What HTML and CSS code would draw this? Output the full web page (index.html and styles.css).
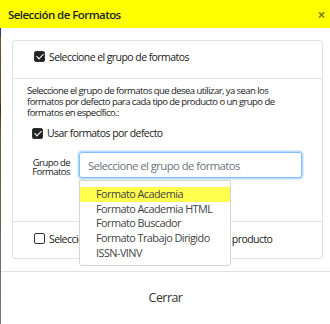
FILE: index.html
```html
<!DOCTYPE html>
<html lang="es">
<head>
<meta charset="utf-8">
<link rel="stylesheet" href="styles.css">
</head>
<body>
<div class="backdrop"></div>
<div class="modal">
  <div class="modal-header">
    <h5 class="modal-title">Selección de Formatos</h5>
    <span class="close">&times;</span>
  </div>
  <div class="modal-body">
    <div class="group">
      <div class="section section-top">
        <label class="check"><span class="box checked"></span>Seleccione el grupo de formatos</label>
      </div>
      <div class="section section-mid">
        <p class="desc">Seleccione el grupo de formatos que desea utilizar, ya sean los formatos por defecto para cada tipo de producto o un grupo de formatos en específico.:</p>
        <label class="check check-inner"><span class="box checked"></span>Usar formatos por defecto</label>
        <div class="field">
          <label class="field-label">Grupo de<br>Formatos</label>
          <div class="select-wrap">
            <div class="input">Seleccione el grupo de formatos</div>
            <ul class="dropdown">
              <li class="active">Formato Academia</li>
              <li>Formato Academia HTML</li>
              <li>Formato Buscador</li>
              <li>Formato Trabajo Dirigido</li>
              <li>ISSN-VINV</li>
            </ul>
          </div>
        </div>
      </div>
      <div class="section section-bot">
        <label class="check"><span class="box"></span>Seleccione los formatos para cada tipo de producto</label>
      </div>
    </div>
  </div>
  <div class="modal-footer">
    <span class="btn-close">Cerrar</span>
  </div>
</div>
</body>
</html>
```
FILE: styles.css
```css
html, body {
  margin: 0;
  padding: 0;
  height: 100%;
}
body {
  font-family: "Open Sans", "Noto Sans", sans-serif;
  letter-spacing: -0.035em;
  color: #212529;
  display: flex;
  background: #fff;
  overflow: hidden;
}
.backdrop {
  width: 1px;
  flex: none;
  background: linear-gradient(#ffff00 0, #ffff00 28px, #2b3a7a 28px, #2b3a7a 37px, #6a5a2e 37px, #5e4a2a 100px, #4b2a1e 110px, #6a5a2e 130px, #6a6a5a 230px, #777 324px);
}
.modal {
  flex: 1;
  display: flex;
  flex-direction: column;
  background: #fff;
}
.modal-header {
  height: 28px;
  flex: none;
  background: #ffff00;
  display: flex;
  align-items: center;
  justify-content: space-between;
  padding: 0 5px 0 7px;
}
.modal-title {
  margin: 0;
  font-size: 11.5px;
  font-weight: 600;
  color: #212529;
}
.close {
  font-size: 14px;
  font-weight: 700;
  color: #000;
  opacity: .5;
  line-height: 1;
  margin-top: 2px;
}
.modal-body {
  padding: 12px 7px 12px 11px;
}
.group {
  border: 1px solid #dfe1e4;
  border-radius: 3px;
}
.section + .section {
  border-top: 1px solid #dfe1e4;
}
.section-top {
  height: 31px;
  padding-bottom: 6px;
  display: flex;
  align-items: center;
  padding-left: 21px;
}
.section-bot {
  height: 33px;
  padding-bottom: 3px;
  display: flex;
  align-items: center;
  padding-left: 21px;
}
.check {
  display: flex;
  align-items: center;
  font-size: 10.5px;
  color: #222;
  white-space: nowrap;
}
.box {
  width: 11px;
  height: 11px;
  box-sizing: border-box;
  border: 1px solid #333;
  border-radius: 2px;
  margin-right: 4px;
  background: #fff;
  position: relative;
  flex: none;
}
.box.checked {
  background: #222;
}
.box.checked::after {
  content: "";
  position: absolute;
  left: 3px;
  top: 0px;
  width: 3px;
  height: 6px;
  border: solid #fff;
  border-width: 0 1.5px 1.5px 0;
  transform: rotate(45deg);
}
.section-mid {
  height: 143px;
  padding: 6px 0 0 14px;
  box-sizing: border-box;
}
.desc {
  margin: 0;
  font-size: 9.5px;
  line-height: 11px;
  color: #222;
  width: 268px;
}
.check-inner {
  height: 14px;
  margin-top: 8px;
  padding-left: 5px;
}
.field {
  display: flex;
  align-items: flex-start;
  margin-top: 12px;
}
.field-label {
  width: 43px;
  text-align: right;
  font-size: 9.5px;
  line-height: 9.5px;
  color: #222;
  margin-top: 5.5px;
}
.select-wrap {
  position: relative;
  margin-left: 9px;
}
.input {
  width: 223px;
  height: 26px;
  box-sizing: border-box;
  border: 1px solid #80bdff;
  border-radius: 3px;
  box-shadow: 0 0 0 1.5px rgba(128, 189, 255, .55);
  font-size: 11.3px;
  color: #6c757d;
  padding-left: 8px;
  display: flex;
  align-items: center;
}
.dropdown {
  position: absolute;
  left: 0;
  top: 28px;
  width: 152px;
  box-sizing: border-box;
  margin: 0;
  padding: 6px 0 5px;
  list-style: none;
  background: #fff;
  border: 1px solid #d5d5d5;
  border-radius: 0 0 3px 3px;
}
.dropdown li {
  height: 14.7px;
  line-height: 14.7px;
  font-size: 10.9px;
  color: #444;
  padding-left: 16px;
  white-space: nowrap;
}
.dropdown li.active {
  background: #ffff4d;
}
.modal-footer {
  border-top: 1px solid #dfe1e4;
  flex: 1;
  display: flex;
  justify-content: center;
  padding-top: 17px;
}
.btn-close {
  font-size: 12.5px;
  color: #333;
}
```
